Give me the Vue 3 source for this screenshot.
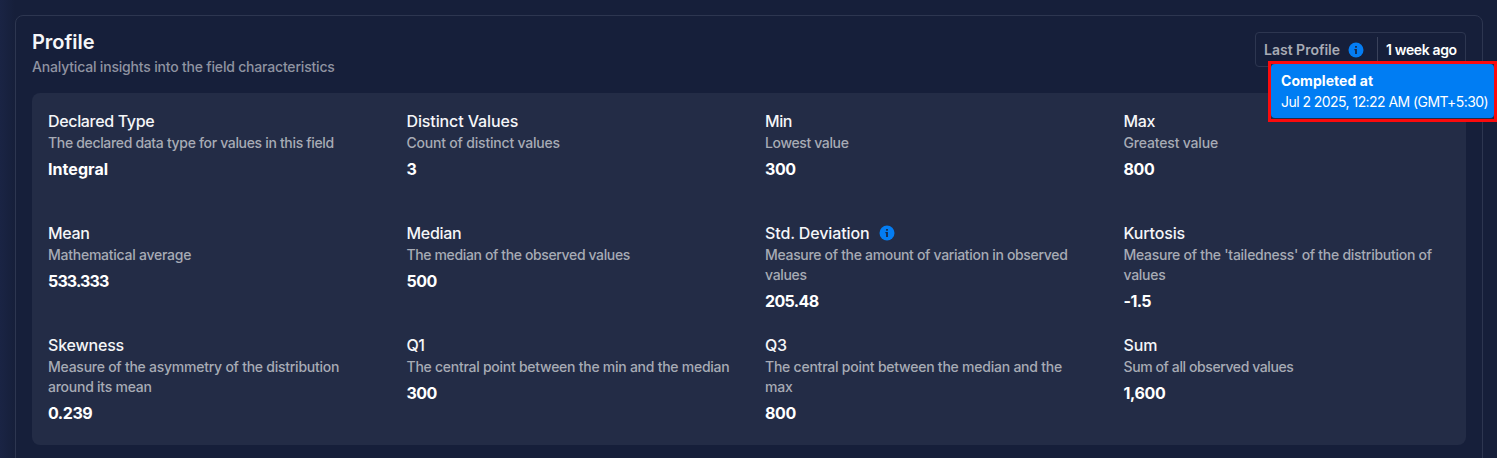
<script setup>
// `track` holds letter spacing in px for the name, description and value lines
const metrics = [
  { name: 'Declared Type', desc: 'The declared data type for values in this field', value: 'Integral', track: [-0.34, -0.33, 0.05] },
  { name: 'Distinct Values', desc: 'Count of distinct values', value: '3', track: [-0.12, -0.2, -0.3] },
  { name: 'Min', desc: 'Lowest value', value: '300', track: [-0.4, -0.36, -0.45] },
  { name: 'Max', desc: 'Greatest value', value: '800', track: [-0.4, -0.17, -0.4] },
  { name: 'Mean', desc: 'Mathematical average', value: '533.333', track: [-0.3, -0.25, -0.85] },
  { name: 'Median', desc: 'The median of the observed values', value: '500', track: [-0.3, -0.37, -0.5] },
  { name: 'Std. Deviation', desc: 'Measure of the amount of variation in observed values', value: '205.48', info: true, track: [-0.12, -0.32, -0.65] },
  { name: 'Kurtosis', desc: "Measure of the 'tailedness' of the distribution of values", value: '-1.5', track: [-0.15, -0.27, -0.6] },
  { name: 'Skewness', desc: 'Measure of the asymmetry of the distribution around its mean', value: '0.239', track: [-0.2, -0.25, -0.45] },
  { name: 'Q1', desc: 'The central point between the min and the median', value: '300', track: [-0.6, -0.26, -0.5] },
  { name: 'Q3', desc: 'The central point between the median and the max', value: '800', track: [-0.4, -0.235, -0.4] },
  { name: 'Sum', desc: 'Sum of all observed values', value: '1,600', track: [-0.1, -0.4, -0.35] }
]
const spacing = (px) => ({ letterSpacing: `${px}px` })
</script>

<template>
  <main class="page">
    <section class="card">
      <header class="head">
        <div>
          <h2 class="title">Profile</h2>
          <p class="subtitle">Analytical insights into the field characteristics</p>
        </div>
        <div class="status">
          <div class="status-label">
            <span>Last Profile</span>
            <svg class="info" viewBox="0 0 16 16">
              <circle cx="8" cy="8" r="7.5" />
              <path d="M7.1 4h1.8v1.8H7.1zM6.4 7h2.5v5H7.1V8.3h-.7z" />
            </svg>
          </div>
          <div class="status-value">1 week ago</div>
          <div class="highlight">
            <div class="tooltip">
              <strong>Completed at</strong>
              <span>Jul 2 2025, 12:22 AM (GMT+5:30)</span>
            </div>
          </div>
        </div>
      </header>
      <div class="panel">
        <article v-for="m in metrics" :key="m.name" class="metric">
          <h3 class="name">
            <span :style="spacing(m.track[0])">{{ m.name }}</span>
            <svg v-if="m.info" class="info" viewBox="0 0 16 16">
              <circle cx="8" cy="8" r="7.5" />
              <path d="M7.1 4h1.8v1.8H7.1zM6.4 7h2.5v5H7.1V8.3h-.7z" />
            </svg>
          </h3>
          <p class="desc" :style="spacing(m.track[1])">{{ m.desc }}</p>
          <p class="value" :style="spacing(m.track[2])">{{ m.value }}</p>
        </article>
      </div>
    </section>
  </main>
</template>

<style>
body {
  overflow: hidden;
  background: #161f3a;
}
</style>

<style scoped>
.page {
  box-sizing: border-box;
  height: 458px;
  overflow: hidden;
  padding: 15px 14px 0 15px;
  background: linear-gradient(90deg, #1a2444 0, #161f3a 15px);
  font-family: Inter, "Liberation Sans", sans-serif;
  color: #f5f6f8;
}
h2, h3, p {
  margin: 0;
}
.card {
  box-sizing: border-box;
  height: 480px;
  padding: 16px;
  border: 1px solid #2d3650;
  border-radius: 8px;
  background: #161f3a;
}
.head {
  display: flex;
  justify-content: space-between;
  height: 61px;
}
.title {
  font-size: 20px;
  line-height: 20px;
  font-weight: 600;
  letter-spacing: -0.05px;
}
.subtitle {
  margin-top: 5px;
  font-size: 14px;
  line-height: 20px;
  font-weight: 450;
  letter-spacing: -0.19px;
  color: #8f93a1;
}
.status {
  position: relative;
  box-sizing: border-box;
  display: flex;
  align-items: center;
  width: 211px;
  height: 35px;
  border: 1px solid #2d3650;
  border-radius: 4px;
  font-size: 14px;
  font-weight: 600;
  white-space: nowrap;
}
.status-label {
  box-sizing: border-box;
  display: flex;
  align-items: center;
  justify-content: space-between;
  width: 122px;
  height: 25px;
  padding: 0 13px 0 8px;
  border-right: 1px solid #3a425b;
  letter-spacing: 0;
  color: #a8abb5;
}
.status-value {
  padding-left: 8px;
  letter-spacing: -0.36px;
  color: #fff;
}
.info {
  flex: none;
  width: 16px;
  height: 16px;
}
.info circle {
  fill: #047df3;
}
.info path {
  fill: #182848;
}
.highlight {
  position: absolute;
  top: 28px;
  left: 12px;
  box-sizing: border-box;
  width: 229px;
  height: 61px;
  border: 3px solid #fb0b0d;
  background: #232c46;
}
.tooltip {
  box-sizing: border-box;
  display: flex;
  flex-direction: column;
  height: 54px;
  padding: 6px 0 0 10px;
  border-radius: 4px;
  background: #007df3;
  font-size: 14px;
  line-height: 21px;
  font-weight: 400;
  letter-spacing: -0.55px;
  color: #fff;
}
.tooltip strong {
  font-weight: 700;
  letter-spacing: 0.06px;
}
.panel {
  display: grid;
  grid-template-columns: repeat(4, 1fr);
  grid-template-rows: repeat(3, 96px);
  gap: 16px 32px;
  padding: 16px;
  border-radius: 8px;
  background: #232c46;
}
.name {
  display: flex;
  align-items: center;
  gap: 9px;
  font-size: 16px;
  line-height: 24px;
  font-weight: 500;
}
.desc {
  padding-right: 1px;
  font-size: 14px;
  line-height: 20px;
  font-weight: 450;
  color: #a7abb5;
}
.value {
  margin-top: 4px;
  font-size: 16px;
  line-height: 24px;
  font-weight: 700;
  color: #fff;
}
</style>
